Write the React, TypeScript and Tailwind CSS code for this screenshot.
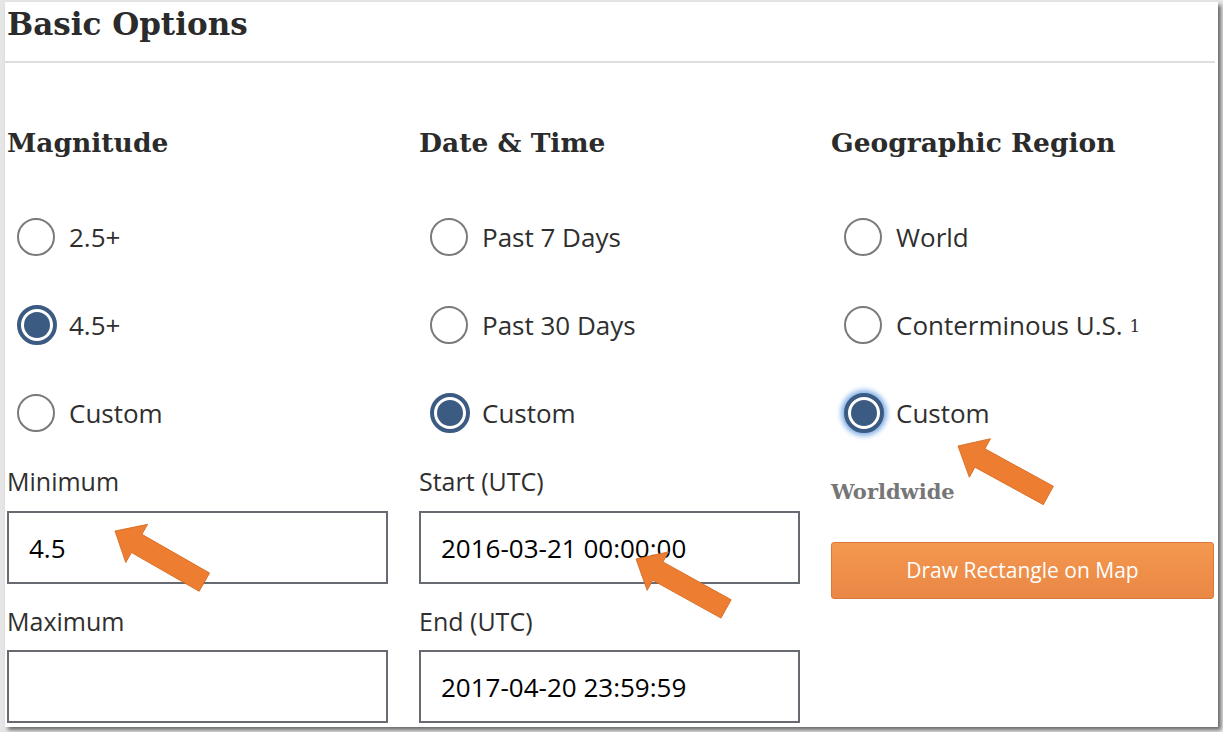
import React from 'react';

const serif = { fontFamily: '"DejaVu Serif", "Liberation Serif", serif' };

type RadioProps = { label: React.ReactNode; checked?: boolean; focused?: boolean };

const Radio = ({ label, checked, focused }: RadioProps) => {
  return (
    <div className="h-[88px] flex items-center">
      <div className="w-[52px] flex items-center justify-start pl-[10px]">
        {checked ? (
          <div
            className={
              focused
                ? 'w-[40px] h-[40px] rounded-full border-[4px] border-[#3c5b82] bg-white p-[3px] shadow-[0_0_5px_3px_rgba(90,150,220,0.75)]'
                : 'w-[40px] h-[40px] rounded-full border-[4px] border-[#3c5b82] bg-white p-[3px]'
            }
          >
            <div className="w-full h-full rounded-full bg-[#3c5b82]" />
          </div>
        ) : (
          <div className="w-[38px] h-[38px] rounded-full border-2 border-[#7a7a7a] bg-white" />
        )}
      </div>
      <span className="text-[26px] text-[#2f2f2f] pl-[10px]">{label}</span>
    </div>
  );
};

const Field = ({ label, value, first }: { label: string; value?: string; first?: boolean }) => {
  return (
    <div>
      <div className={first ? 'mt-[5px] h-[40px] flex items-center text-[25px] text-[#2f2f2f]' : 'mt-[18px] h-[40px] flex items-center text-[25px] text-[#2f2f2f]'}>
        {label}
      </div>
      <input
        readOnly
        value={value ?? ''}
        className={
          first
            ? 'mt-[9px] w-[381px] h-[73px] border-2 border-[#676a70] px-[20px] text-[26px] text-black bg-white outline-none'
            : 'mt-[8px] w-[381px] h-[73px] border-2 border-[#676a70] px-[20px] text-[26px] text-black bg-white outline-none'
        }
      />
    </div>
  );
};

const Arrow = ({ x, y, angle }: { x: number; y: number; angle: number }) => (
  <path
    d="M0,0 L25,-22 L25,-10.5 L103,-10.5 L103,10.5 L25,10.5 L25,22 Z"
    transform={`translate(${x} ${y}) rotate(${angle})`}
    fill="#ed7d31"
    stroke="#d46b22"
    strokeWidth="0.8"
    strokeLinejoin="miter"
  />
);

export default function App() {
  return (
    <div
      className="relative w-[1223px] h-[732px] bg-[#e6e6e6] overflow-hidden"
      style={{ fontFamily: '"Open Sans", "Noto Sans", sans-serif' }}
    >
      <div className="absolute left-[5px] top-[2px] w-[1213px] h-[725px] bg-white shadow-[3px_3px_4px_rgba(0,0,0,0.55)]">
        {/* Title */}
        <div className="h-[59px] pl-[2px] flex items-start pt-[2px]">
          <h1 className="text-[31px] font-bold text-[#2b2b2b] leading-[40px]" style={serif}>
            Basic Options
          </h1>
        </div>
        <div className="h-[2px] bg-[#dedede] mr-[3px]" />

        <div className="grid grid-cols-[412px_412px_1fr] pl-[2px] pr-[3px]">
          {/* Magnitude */}
          <div>
            <h2 className="mt-[60px] h-[40px] flex items-center text-[26.5px] font-bold text-[#2b2b2b]" style={serif}>
              Magnitude
            </h2>
            <div className="mt-[30px]">
              <Radio label="2.5+" />
              <Radio label="4.5+" checked />
              <Radio label="Custom" />
            </div>
            <Field label="Minimum" value="4.5" first />
            <Field label="Maximum" />
          </div>

          {/* Date & Time */}
          <div>
            <h2 className="mt-[60px] h-[40px] flex items-center text-[26.5px] font-bold text-[#2b2b2b]" style={serif}>
              Date &amp; Time
            </h2>
            <div className="mt-[30px] pl-[1px]">
              <Radio label="Past 7 Days" />
              <Radio label="Past 30 Days" />
              <Radio label="Custom" checked />
            </div>
            <Field label="Start (UTC)" value="2016-03-21 00:00:00" first />
            <Field label="End (UTC)" value="2017-04-20 23:59:59" />
          </div>

          {/* Geographic Region */}
          <div>
            <h2 className="mt-[60px] h-[40px] flex items-center text-[26.5px] font-bold text-[#2b2b2b]" style={serif}>
              Geographic Region
            </h2>
            <div className="mt-[30px] pl-[3px]">
              <Radio label="World" />
              <Radio
                label={
                  <>
                    Conterminous U.S.{' '}
                    <sup className="text-[17px] relative -top-[3px]" style={serif}>
                      1
                    </sup>
                  </>
                }
              />
              <Radio label="Custom" checked focused />
            </div>
            <div className="mt-[20px] h-[30px] flex items-center text-[21px] font-bold text-[#767676]" style={serif}>
              Worldwide
            </div>
            <button className="mt-[35px] w-[383px] h-[57px] rounded-[3px] border border-[#d8783a] bg-gradient-to-b from-[#f4984f] to-[#ea8745] text-white text-[21px]">
              Draw Rectangle on Map
            </button>
          </div>
        </div>
      </div>

      {/* Callout arrows */}
      <svg className="absolute left-0 top-0 pointer-events-none" width="1223" height="732">
        <Arrow x={115} y={531} angle={29.8} />
        <Arrow x={636} y={559} angle={29} />
        <Arrow x={958} y={446} angle={28.7} />
      </svg>
    </div>
  );
}
